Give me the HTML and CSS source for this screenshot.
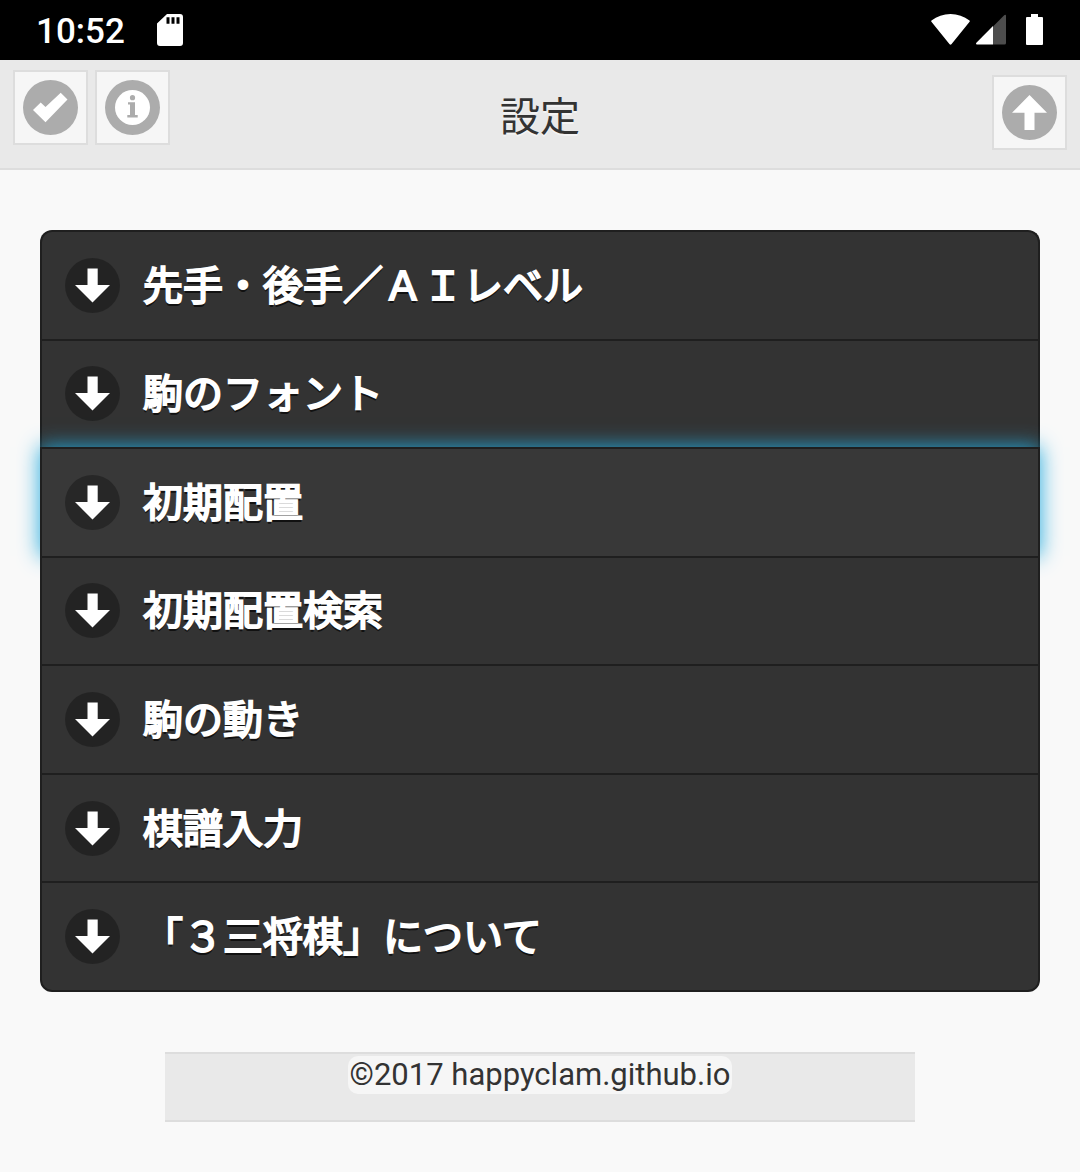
FILE: index.html
```html
<!DOCTYPE html>
<html lang="ja">
<head>
<meta charset="utf-8">
<meta name="viewport" content="width=device-width, initial-scale=1">
<title>設定</title>
<link rel="stylesheet" href="styles.css">
</head>
<body>
<svg class="sprite" aria-hidden="true">
  <symbol id="arrow-down" viewBox="0 0 55 55">
    <circle class="disc-dark" cx="27.5" cy="27.5" r="27.5"/>
    <path fill="#fff" d="M22.5 10.5h10.2V27H45L27.5 44.5 10 27h12.5z"/>
  </symbol>
</svg>

<div class="status">
  <time class="status-time">10:52</time>
  <svg class="status-sd" viewBox="0 0 26 32" aria-hidden="true">
    <path fill="#fff" fill-rule="evenodd" d="M10 0h13a3 3 0 0 1 3 3v26a3 3 0 0 1-3 3H3a3 3 0 0 1-3-3V9.500zM9.500 3.200v6.500h3V3.200zM14.500 3.200v6.500h3V3.200zM19.500 3.200v6.500h3V3.200z"/>
  </svg>
  <div class="status-icons">
    <svg class="status-wifi" viewBox="0 0 39 31" aria-hidden="true">
      <path fill="#fff" d="M.5 6.500C6 2.300 12.500 0 19.500 0s13.500 2.300 19 6.500q.6.600.1 1.200L20.400 30.300q-.9.900-1.800 0L.4 7.700q-.5-.6.100-1.200z"/>
    </svg>
    <svg class="status-signal" viewBox="0 0 30 31" aria-hidden="true">
      <path fill="#4d4d4d" d="M17 12.500 28.200 1.200Q30 0 30 2v27q0 1.500-1.500 1.500H17z"/>
      <path fill="#fff" d="M17 12v18.500H1q-1.600-.4-.6-1.800z"/>
    </svg>
    <svg class="status-battery" viewBox="0 0 17 31" aria-hidden="true">
      <path fill="#fff" d="M5 0h7v3h4q1 0 1 1v26q0 1-1 1H1q-1 0-1-1V4q0-1 1-1h4z"/>
    </svg>
  </div>
</div>

<header class="header">
  <div class="header-left">
    <button class="tool" type="button" aria-label="OK">
      <svg class="icon" viewBox="0 0 55 55" aria-hidden="true">
        <circle fill="#acacac" cx="27.500" cy="27.500" r="27.500"/>
        <path fill="#fff" d="M10 30l7.700-7.500 4.800 4.600 15.200-14.400 6.800 6.800L22.500 42.200z"/>
      </svg>
    </button>
    <button class="tool" type="button" aria-label="情報">
      <svg class="icon" viewBox="0 0 55 55" aria-hidden="true">
        <circle fill="#acacac" cx="27.500" cy="27.500" r="27.500"/>
        <circle fill="#fff" cx="27.500" cy="27.500" r="17.500"/>
        <circle fill="#acacac" cx="27.500" cy="17.700" r="2.600"/>
        <path fill="#acacac" d="M23 22.300h7V35h2.700v2.400H22.300V35H25V24.600h-2z"/>
      </svg>
    </button>
  </div>
  <h1 class="title">設定</h1>
  <div class="header-right">
    <button class="tool" type="button" aria-label="戻る">
      <svg class="icon" viewBox="0 0 55 55" aria-hidden="true">
        <circle fill="#acacac" cx="27.500" cy="27.500" r="27.500"/>
        <path fill="#fff" d="M27.500 10 45 27.800H32.500V45h-10V27.800H10z"/>
      </svg>
    </button>
  </div>
</header>

<main class="content">
  <div class="menu">
    <button class="item" type="button"><svg class="icon" aria-hidden="true"><use href="#arrow-down"/></svg><span class="label">先手・後手／ＡＩレベル</span></button>
    <button class="item" type="button"><svg class="icon" aria-hidden="true"><use href="#arrow-down"/></svg><span class="label">駒のフォント</span></button>
    <button class="item item-active" type="button"><svg class="icon" aria-hidden="true"><use href="#arrow-down"/></svg><span class="label">初期配置</span></button>
    <button class="item" type="button"><svg class="icon" aria-hidden="true"><use href="#arrow-down"/></svg><span class="label">初期配置検索</span></button>
    <button class="item" type="button"><svg class="icon" aria-hidden="true"><use href="#arrow-down"/></svg><span class="label">駒の動き</span></button>
    <button class="item" type="button"><svg class="icon" aria-hidden="true"><use href="#arrow-down"/></svg><span class="label">棋譜入力</span></button>
    <button class="item" type="button"><svg class="icon" aria-hidden="true"><use href="#arrow-down"/></svg><span class="label">「３三将棋」について</span></button>
  </div>
</main>

<footer class="footer">
  <a class="credit" href="#">©2017 happyclam.github.io</a>
</footer>
</body>
</html>
```
FILE: styles.css
```css
* {
  box-sizing: border-box;
}

body {
  margin: 0;
  background: #f9f9f9;
  color: #333;
  font-family: Roboto, "Noto Sans CJK JP", sans-serif;
}

.sprite {
  display: none;
}

.disc-dark {
  fill: #000;
  fill-opacity: 0.3;
}

.icon {
  display: block;
  flex: none;
  width: 55px;
  height: 55px;
}

/* Status bar */
.status {
  display: flex;
  align-items: center;
  height: 60px;
  padding: 0 37px 0 36px;
  background: #000;
  color: #fff;
}

.status-time {
  padding-top: 3px;
  font-size: 35px;
  font-weight: 500;
  line-height: 40px;
}

.status-sd {
  width: 26px;
  height: 32px;
  margin-left: 32px;
}

.status-icons {
  display: flex;
  align-items: center;
  margin-left: auto;
  padding-bottom: 2px;
}

.status-wifi {
  width: 39px;
  height: 31px;
}

.status-signal {
  width: 30px;
  height: 31px;
  margin: 0 20px 0 6px;
}

.status-battery {
  width: 17px;
  height: 31px;
}

/* Header */
.header {
  display: grid;
  grid-template-columns: 1fr auto 1fr;
  align-items: start;
  padding: 10px 13px 18px;
  border-bottom: 2px solid #ddd;
  background: #e9e9e9;
}

.header-left {
  display: flex;
  gap: 7px;
}

.header-right {
  display: flex;
  justify-content: flex-end;
  padding-top: 5px;
}

.tool {
  display: flex;
  align-items: center;
  justify-content: center;
  width: 75px;
  height: 75px;
  padding: 0;
  border: 2px solid #ddd;
  background: #f6f6f6;
}

.title {
  margin: 0;
  padding-top: 18px;
  font-size: 40px;
  font-weight: 400;
  line-height: 60px;
  text-shadow: 0 2px 0 #f3f3f3;
}

/* Menu */
.content {
  padding: 60px 40px;
}

.menu {
  display: grid;
  grid-auto-rows: 1fr;
  min-height: 762px;
  padding-bottom: 2px;
}

.item {
  display: flex;
  align-items: center;
  gap: 23px;
  padding: 0 23px;
  border: 2px solid #1f1f1f;
  border-bottom-width: 0;
  background: #333;
  color: #fff;
  font-family: "Noto Sans CJK JP", sans-serif;
  font-size: 40px;
  font-weight: 400;
  line-height: 60px;
  text-align: left;
  text-shadow: 0 3px 0 #111;
}

.item:first-child {
  border-radius: 12px 12px 0 0;
}

/* The closing border hangs below the row, so all rows stay equal. */
.item:last-child {
  margin-bottom: -2px;
  border-bottom-width: 2px;
  border-radius: 0 0 12px 12px;
}

.item-active {
  background: #383838;
  box-shadow: 0 0 20px #2ad;
}

/* Emboldened regular weight: an even outline on every stroke. */
.label {
  padding-bottom: 5px;
  -webkit-text-stroke: 2px #fff;
}

/* Footer */
.footer {
  width: 750px;
  max-width: 100%;
  min-height: 70px;
  margin: 0 auto 49px;
  border: solid #ddd;
  border-width: 2px 0;
  background: #e9e9e9;
  text-align: center;
  line-height: 42px;
}

.credit {
  padding: 0 2px 1px;
  border-radius: 10px;
  background: #f6f6f6;
  color: #333;
  font-size: 31px;
  text-decoration: none;
}
```
